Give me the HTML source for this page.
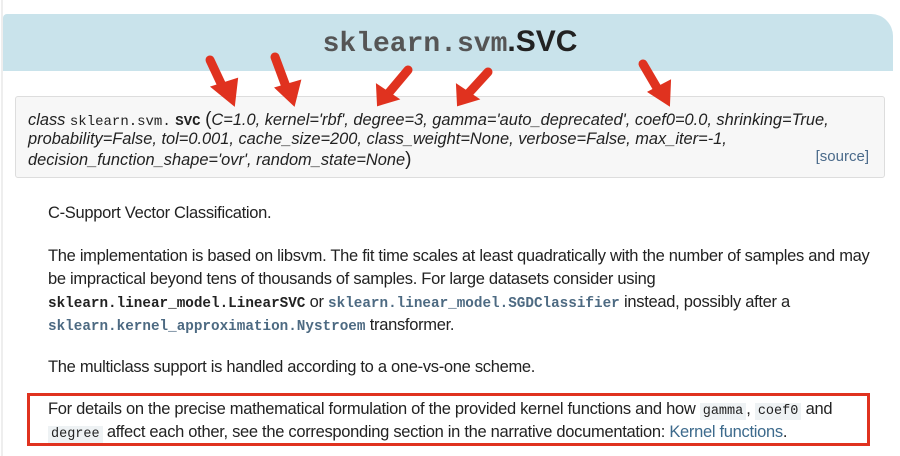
<!DOCTYPE html>
<html><head><style>
body{margin:0;width:900px;height:456px;background:#fff;position:relative;overflow:hidden;font-family:"Liberation Sans",Arial,sans-serif;color:#222}
.hdr{position:absolute;left:3px;top:14px;width:890px;height:57px;background:#c9e3eb;border-top-right-radius:22px;border-top-left-radius:4px}
.title{position:absolute;left:0;width:900px;top:25px;text-align:center;font-size:30px;font-weight:bold;color:#222}
.title .m{font-family:"Liberation Mono",monospace;color:#555;font-size:28px}
.sig{position:absolute;left:15px;top:96px;width:870px;height:82px;background:#f7f7f7;border:1px solid #ddd;border-radius:3px;box-sizing:border-box}
.sig p{margin:0;position:absolute;left:12px;font-size:16.4px;font-style:italic;white-space:nowrap;letter-spacing:0}
.mono{font-family:"Liberation Mono",monospace;font-style:normal;font-size:14px}
.src{position:absolute;right:15px;top:51px;font-size:15px;color:#4a6a8a}
.t{position:absolute;left:48px;font-size:16.5px;white-space:nowrap;letter-spacing:-0.3px}
.c{font-family:"Liberation Mono",monospace;font-weight:bold;font-size:14.3px;color:#222;letter-spacing:0}
.cb{font-family:"Liberation Mono",monospace;font-weight:bold;font-size:14.3px;color:#4d6a82;letter-spacing:0}
.k{font-family:"Liberation Mono",monospace;font-size:13.5px;background:#eef2f4;padding:1px 3px;letter-spacing:0}
.box{position:absolute;left:27px;top:393px;width:843px;height:53px;border:3px solid #e0321f;box-sizing:border-box}
</style></head><body>
<div style="position:absolute;left:1px;top:0;width:2px;height:456px;background:#eee"></div>
<div class="hdr"></div>
<div class="title"><span class="m">sklearn.svm</span>.SVC</div>
<div class="sig">
<p style="top:12px">class <span class="mono">sklearn.svm.</span> <b class="mono" style="font-weight:bold">SVC</b> <span style="font-style:normal;font-size:19px">(</span>C=1.0, kernel='rbf', degree=3, gamma='auto_deprecated', coef0=0.0, shrinking=True,</p>
<p style="top:33px">probability=False, tol=0.001, cache_size=200, class_weight=None, verbose=False, max_iter=-1,</p>
<p style="top:52px">decision_function_shape='ovr', random_state=None<span style="font-style:normal;font-size:19px">)</span></p>
<span class="src">[source]</span>
</div>
<svg style="position:absolute;left:0;top:0" width="900" height="456">
<g stroke="#e0321f" stroke-width="9" stroke-linecap="round" fill="#e0321f">
<line x1="210" y1="60" x2="225" y2="92"/><polygon points="212,87 234,105 237,79" stroke-width="2"/>
<line x1="275" y1="57" x2="288" y2="92"/><polygon points="276,88 294,105 300,81" stroke-width="2"/>
<line x1="408" y1="70" x2="387" y2="95"/><polygon points="377,85 378,105 398,99" stroke-width="2"/>
<line x1="488" y1="72" x2="467" y2="95"/><polygon points="457,85 458,105 478,99" stroke-width="2"/>
<line x1="643" y1="64" x2="660" y2="93"/><polygon points="649,92 669,105 670,81" stroke-width="2"/>
</g></svg>
<div class="t" style="top:204px">C-Support Vector Classification.</div>
<div class="t" style="top:247px">The implementation is based on libsvm. The fit time scales at least quadratically with the number of samples and may</div>
<div class="t" style="top:270px">be impractical beyond tens of thousands of samples. For large datasets consider using</div>
<div class="t" style="top:293px"><span class="c">sklearn.linear_model.LinearSVC</span> or <span class="cb">sklearn.linear_model.SGDClassifier</span> instead, possibly after a</div>
<div class="t" style="top:316px"><span class="cb">sklearn.kernel_approximation.Nystroem</span> transformer.</div>
<div class="t" style="top:358px">The multiclass support is handled according to a one-vs-one scheme.</div>
<div class="t" style="top:400px">For details on the precise mathematical formulation of the provided kernel functions and how <span class="k">gamma</span>, <span class="k">coef0</span> and</div>
<div class="t" style="top:423px"><span class="k">degree</span> affect each other, see the corresponding section in the narrative documentation: <span style="color:#3d6a8c">Kernel functions</span>.</div>
<div class="box"></div>
</body></html>
